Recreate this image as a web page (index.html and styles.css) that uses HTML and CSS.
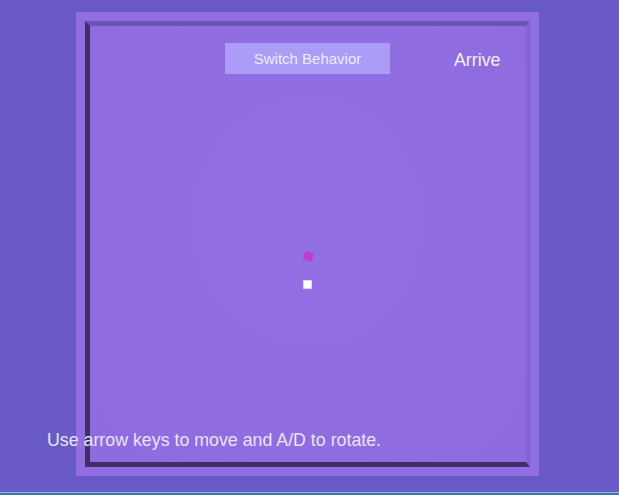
FILE: index.html
```html
<!DOCTYPE html>
<html>
<head>
<meta charset="utf-8">
<link rel="stylesheet" href="styles.css">
</head>
<body>
<div class="screen">
  <div class="stage">
    <div class="frame">
      <div class="arena">
        <div class="agent"></div>
        <div class="target"></div>
      </div>
    </div>
    <div class="hud">
      <button class="switch-btn">Switch Behavior</button>
      <span class="mode">Arrive</span>
    </div>
    <p class="hint">Use arrow keys to move and A/D to rotate.</p>
  </div>
  <div class="taskbar"></div>
</div>
</body>
</html>
```
FILE: styles.css
```css
html, body {
  margin: 0;
  padding: 0;
  width: 619px;
  height: 495px;
  overflow: hidden;
  background: #6a5ac7;
  font-family: "Liberation Sans", Arial, sans-serif;
}
.screen {
  display: flex;
  flex-direction: column;
  width: 619px;
  height: 495px;
}
.stage {
  position: relative;
  height: 492px;
  padding: 12px 0 0 76px;
  box-sizing: border-box;
}
.frame {
  width: 463px;
  height: 464px;
  box-sizing: border-box;
  padding: 9px;
  background: #916fe3;
}
.arena {
  position: relative;
  width: 445px;
  height: 446px;
  box-sizing: border-box;
  border-style: solid;
  border-width: 5px 4px 5px 5px;
  border-color: #6c56b4 #8864ce #3d2f6b #3d2f6b;
  background: radial-gradient(ellipse at 50% 45%, #9270e3 0%, #8e6cdf 100%);
}
.agent {
  position: absolute;
  left: 214px;
  top: 226px;
  width: 9px;
  height: 9px;
  background: #c23ad6;
  transform: rotate(22deg);
}
.target {
  position: absolute;
  left: 213px;
  top: 254px;
  width: 7px;
  height: 7px;
  background: #ffffff;
  border: 1px solid #ddd2f8;
}
.hud {
  position: absolute;
  left: 225px;
  top: 43px;
  display: flex;
  align-items: center;
}
.switch-btn {
  width: 165px;
  height: 31px;
  padding: 0;
  border: 0;
  background: #aa9cf7;
  color: #eeeafd;
  font-family: "Liberation Sans", Arial, sans-serif;
  font-size: 15px;
}
.mode {
  margin-left: 64px;
  margin-top: 4px;
  color: #f4f0ff;
  font-size: 17.8px;
}
.hint {
  position: absolute;
  left: 47px;
  top: 430px;
  margin: 0;
  color: #e9e3f8;
  font-size: 17.8px;
}
.taskbar {
  height: 3px;
  border-top: 1px solid #b4aaea;
  background: #2f7ea2;
  box-sizing: border-box;
}
```
